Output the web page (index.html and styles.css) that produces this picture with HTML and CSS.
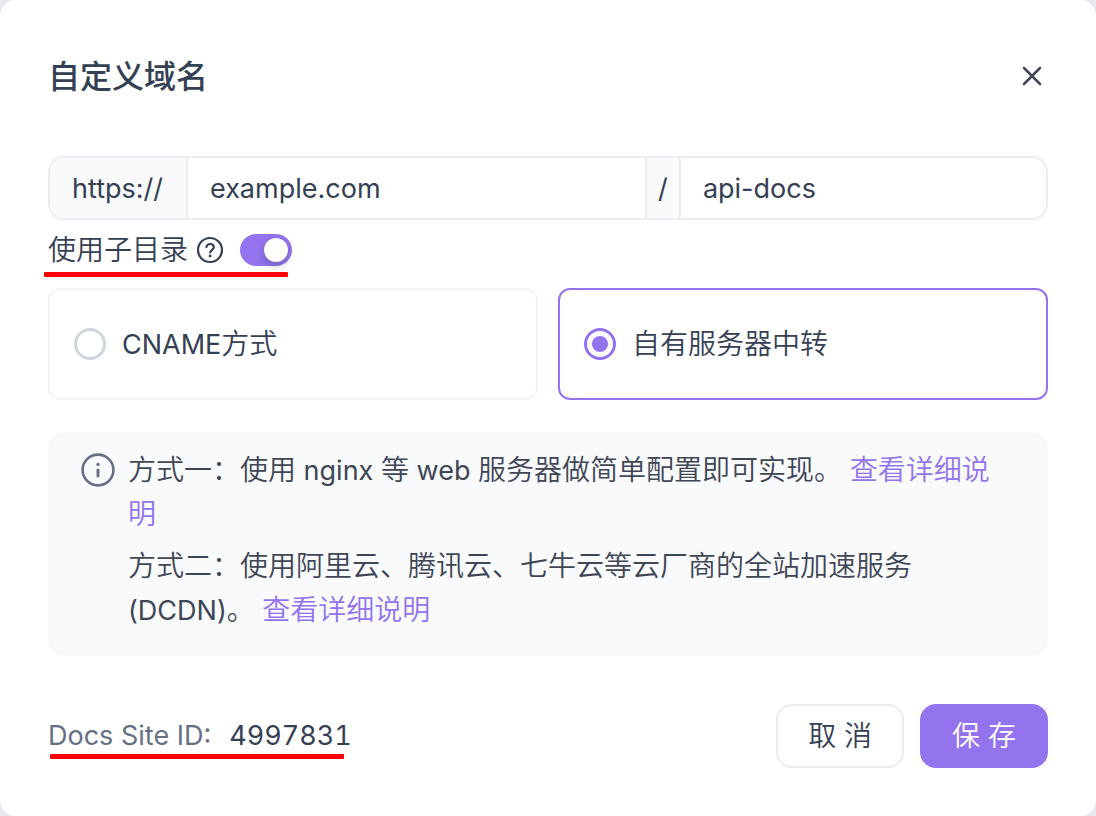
FILE: index.html
```
<!DOCTYPE html>
<html lang="zh-CN">
<head>
    <meta charset="UTF-8">
    <meta name="viewport" content="width=device-width, initial-scale=1.0">
    <title>自定义域名</title>
    <link rel="stylesheet" href="styles.css">
</head>
<body>
    <form class="modal" role="dialog" aria-labelledby="modal-title">
        <header class="modal-header">
            <h1 id="modal-title">自定义域名</h1>
            <button type="button" class="close-btn" aria-label="关闭">
                <svg width="24" height="24" viewBox="0 0 24 24" fill="none" stroke="currentColor" stroke-width="2.5" stroke-linecap="round">
                    <path d="M4 4l16 16M20 4L4 20"/>
                </svg>
            </button>
        </header>

        <div class="domain-group">
            <label class="addon addon-scheme" for="domain">https://</label>
            <input type="text" id="domain" class="input-domain" value="example.com">
            <label class="addon addon-slash" for="subpath">/</label>
            <input type="text" id="subpath" class="input-path" value="api-docs">
        </div>

        <div class="subdir-row marked">
            <label for="use-subdir">使用子目录</label>
            <svg class="help-icon" width="28" height="28" viewBox="0 0 28 28" fill="none" stroke="currentColor" stroke-width="2.2" stroke-linecap="round" stroke-linejoin="round">
                <circle cx="14" cy="14" r="12"/>
                <path d="M10.4 11c.5-2 1.9-3 3.7-3 2.1 0 3.7 1.4 3.7 3.3 0 2.6-3.6 2.9-3.6 5.2"/>
                <circle cx="14.1" cy="20" r="1.4" fill="currentColor" stroke="none"/>
            </svg>
            <input type="checkbox" id="use-subdir" class="switch" role="switch" checked>
        </div>

        <div class="mode-list">
            <label class="mode-card">
                <input type="radio" name="mode" value="cname">
                <span><span class="latin">CNAME</span>方式</span>
            </label>
            <label class="mode-card">
                <input type="radio" name="mode" value="proxy" checked>
                <span>自有服务器中转</span>
            </label>
        </div>

        <div class="notice">
            <svg class="info-icon" width="36" height="44" viewBox="0 0 36 44" fill="none" stroke="currentColor" stroke-width="2.6" stroke-linecap="round">
                <circle cx="18" cy="22" r="15.4"/>
                <path stroke-width="3" d="M18 22v6"/>
                <circle cx="18" cy="16.4" r="1.7" fill="currentColor" stroke="none"/>
            </svg>
            <div class="notice-text">
                <p>方式一：使用<span class="latin"> nginx </span>等<span class="latin"> web </span>服务器做简单配置即可实现。<span class="latin"> </span><a href="#nginx">查看详细说明</a></p>
                <p>方式二：使用阿里云、腾讯云、七牛云等云厂商的全站加速服务<span class="latin"> (DCDN)</span>。<span class="latin"> </span><a href="#dcdn">查看详细说明</a></p>
            </div>
        </div>

        <footer class="modal-footer">
            <div class="site-id marked">
                <span>Docs Site ID:</span>
                <strong>4997831</strong>
            </div>
            <button type="button" class="btn">取 消</button>
            <button type="submit" class="btn btn-primary">保 存</button>
        </footer>
    </form>
</body>
</html>
```
FILE: styles.css
```
* {
    box-sizing: border-box;
}

body {
    margin: 0;
    background: #e9eaee;
    color: #344054;
    font-family: Inter, "Noto Sans CJK SC DemiLight", "Noto Sans CJK SC", sans-serif;
    font-size: 28px;
    line-height: 44px;
}

button,
input {
    margin: 0;
    font: inherit;
    color: inherit;
}

/* Latin words run slightly smaller than the Chinese around them */
.latin {
    font-size: 27px;
    line-height: 1;
}

.modal {
    padding: 48px;
    background: #fff;
    border-radius: 16px;
}

/* Header */
.modal-header {
    display: flex;
    align-items: center;
    justify-content: space-between;
    height: 56px;
    margin-bottom: 52px;
}

.modal-header h1 {
    margin: 0;
    padding-top: 2px;
    font-family: Inter, "Noto Sans CJK SC", sans-serif;
    font-size: 32px;
    font-weight: 500;
}

.close-btn {
    display: flex;
    padding: 4px;
    border: 0;
    background: none;
    color: #3f4656;
}

/* Domain input */
.domain-group {
    display: flex;
    height: 64px;
    border: 2px solid #eaecf0;
    border-radius: 16px;
    font-size: 27px;
    overflow: hidden;
}

.addon {
    display: flex;
    align-items: center;
    justify-content: center;
    background: #f9fafb;
}

.addon-scheme {
    padding: 0 23px 0 22px;
    border-right: 2px solid #eaecf0;
}

.addon-slash {
    width: 36px;
    border: solid #eaecf0;
    border-width: 0 2px;
}

.domain-group input {
    min-width: 0;
    padding: 2px 22px 0;
    border: 0;
    background: #fff;
    outline: none;
}

.addon {
    padding-top: 2px;
}

.input-domain {
    flex: 9;
}

.input-path {
    flex: 7;
}

/* Red marker line under a row */
.marked {
    position: relative;
}

.marked::after {
    content: "";
    position: absolute;
    height: 5px;
    border-radius: 1px;
    background: #f00;
}

.subdir-row {
    display: flex;
    align-items: center;
    width: fit-content;
    height: 60px;
    margin-bottom: 8px;
}

.subdir-row::after {
    left: -4px;
    right: 4px;
    bottom: 3px;
}

.help-icon {
    margin: 0 16px 0 8px;
}

.switch {
    appearance: none;
    display: flex;
    width: 52px;
    height: 32px;
    padding: 4px;
    border-radius: 16px;
    background: #d0d5dd;
}

.switch::before {
    content: "";
    width: 24px;
    height: 24px;
    border-radius: 50%;
    background: #fff;
    box-shadow: 0 4px 8px rgba(0, 35, 11, 0.2);
}

.switch:checked {
    justify-content: flex-end;
    background: #9373ee;
}

/* Mode cards */
.mode-list {
    display: grid;
    grid-template-columns: 1fr 1fr;
    gap: 20px;
    margin-bottom: 32px;
}

.mode-card {
    display: flex;
    align-items: center;
    gap: 16px;
    height: 112px;
    padding: 0 24px;
    border: 2px solid #f4f4f6;
    border-radius: 12px;
}

.mode-card:has(:checked) {
    border-color: #9373ee;
}

.mode-card input {
    appearance: none;
    display: grid;
    place-items: center;
    width: 32px;
    height: 32px;
    border: 3px solid #d0d5dd;
    border-radius: 50%;
}

.mode-card input:checked {
    border-color: #9373ee;
}

.mode-card input:checked::before {
    content: "";
    width: 16px;
    height: 16px;
    border-radius: 50%;
    background: #9373ee;
}

/* Notice */
.notice {
    display: flex;
    gap: 12px;
    margin-bottom: 48px;
    padding: 16px 32px 24px;
    border-radius: 16px;
    background: #f9fafc;
    color: #3f4656;
}

.info-icon {
    flex: none;
    color: #667085;
}

.notice p {
    margin: 0;
}

.notice p + p {
    margin-top: 8px;
}

.notice a {
    color: #9373ee;
    text-decoration: none;
}

/* Footer */
.modal-footer {
    display: flex;
    align-items: center;
    gap: 16px;
}

.site-id {
    display: flex;
    gap: 18px;
    height: 64px;
    margin-right: auto;
    font-size: 27px;
    line-height: 64px;
    color: #667085;
}

.site-id::after {
    left: 2px;
    right: 8px;
    bottom: 9px;
}

.site-id strong {
    font-weight: 400;
    font-variant-numeric: tabular-nums;
    color: #344054;
}

.btn {
    height: 64px;
    padding: 0 30px;
    border: 2px solid #eaecf0;
    border-radius: 16px;
    background: #fff;
}

.btn-primary {
    border-color: #9373ee;
    background: #9373ee;
    color: #fff;
}
```
